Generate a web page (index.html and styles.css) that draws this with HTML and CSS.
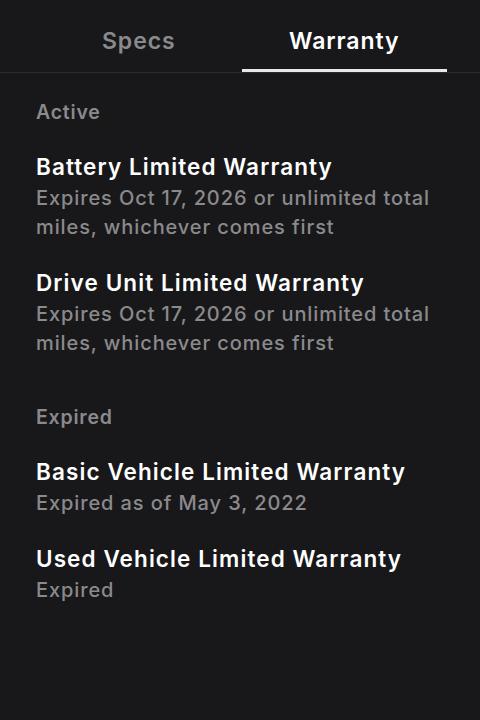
FILE: index.html
```html
<!DOCTYPE html>
<html lang="en">
<head>
<meta charset="utf-8">
<title>Warranty</title>
<link rel="stylesheet" href="styles.css">
</head>
<body>
<div class="page">
  <nav class="tabs">
    <div class="tabs-inner">
      <div class="tab">Specs</div>
      <div class="tab tab-active">Warranty</div>
    </div>
  </nav>
  <main class="content">
    <section class="section">
      <h2 class="section-label">Active</h2>
      <div class="item">
        <div class="item-title">Battery Limited Warranty</div>
        <div class="item-sub">Expires Oct 17, 2026 or unlimited total miles, whichever comes first</div>
      </div>
      <div class="item">
        <div class="item-title">Drive Unit Limited Warranty</div>
        <div class="item-sub">Expires Oct 17, 2026 or unlimited total miles, whichever comes first</div>
      </div>
    </section>
    <section class="section">
      <h2 class="section-label">Expired</h2>
      <div class="item">
        <div class="item-title">Basic Vehicle Limited Warranty</div>
        <div class="item-sub">Expired as of May 3, 2022</div>
      </div>
      <div class="item">
        <div class="item-title">Used Vehicle Limited Warranty</div>
        <div class="item-sub">Expired</div>
      </div>
    </section>
  </main>
</div>
</body>
</html>
```

FILE: styles.css
```css
html, body {
  margin: 0;
  padding: 0;
  background: #18181a;
}
body {
  font-family: Inter, "Noto Sans", "Liberation Sans", sans-serif;
  color: #ffffff;
  width: 480px;
  height: 720px;
  overflow: hidden;
}
.tabs {
  border-bottom: 1px solid #2c2c2f;
  height: 72px;
  padding: 0 33px 0 36px;
}
.tabs-inner {
  display: grid;
  grid-template-columns: 1fr 1fr;
  height: 100%;
}
.tab {
  display: flex;
  align-items: center;
  justify-content: center;
  font-size: 23px;
  font-weight: 600;
  color: #8a8a8d;
  padding-top: 10px;
  box-sizing: border-box;
  letter-spacing: 0.9px;
}
.tab-active {
  color: #ffffff;
  border-bottom: 3px solid #e8e8ea;
  padding-top: 13px;
}
.content {
  padding: 25px 36px 0 36px;
}
.section {
  display: flex;
  flex-direction: column;
}
.section + .section {
  margin-top: 19px;
}
.section-label {
  margin: 0 0 26px 0;
  font-size: 19.5px;
  line-height: 28px;
  font-weight: 600;
  color: #8a8a8d;
  letter-spacing: 0.8px;
}
.item {
  margin-bottom: 26px;
}
.item-title {
  font-size: 22.5px;
  line-height: 30px;
  font-weight: 600;
  color: #ffffff;
  margin-bottom: 2px;
  letter-spacing: 1.1px;
}
.item-sub {
  font-size: 20px;
  line-height: 29px;
  font-weight: 500;
  color: #8a8a8d;
  letter-spacing: 0.9px;
}
```
